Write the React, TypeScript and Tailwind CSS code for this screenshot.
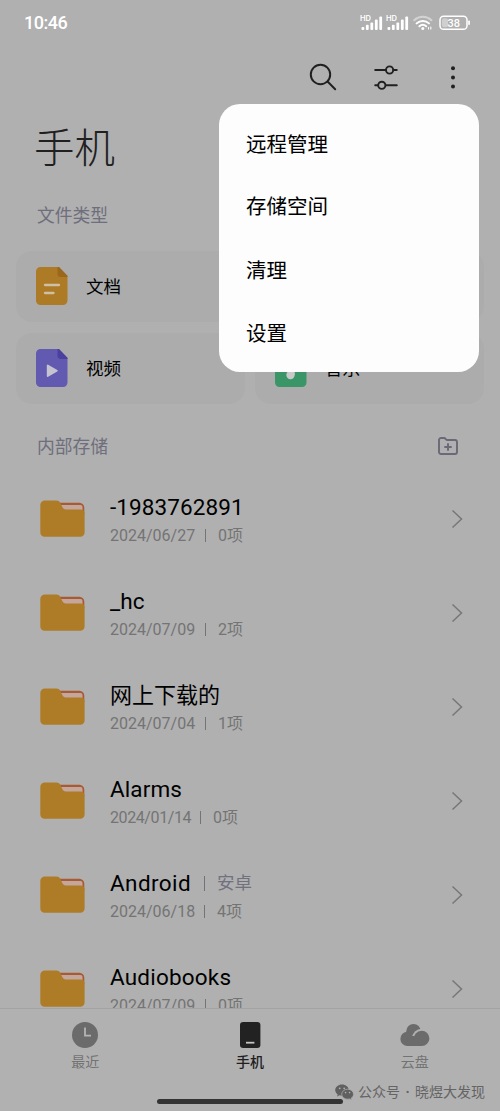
import React from 'react';

interface FolderItem {
  name: string;
  tag?: string;
  date: string;
  count: string;
  nameClass: string;
  dateClass: string;
}

const FOLDERS: FolderItem[] = [
  { name: '-1983762891', date: '2024/06/27', count: '0项', nameClass: 'tracking-[0.1px]', dateClass: 'w-[85px]' },
  { name: '_hc', date: '2024/07/09', count: '2项', nameClass: 'tracking-[0.1px]', dateClass: 'w-[85px]' },
  { name: '网上下载的', date: '2024/07/04', count: '1项', nameClass: 'text-[22px]', dateClass: 'w-[85px]' },
  { name: 'Alarms', date: '2024/01/14', count: '0项', nameClass: 'tracking-[0.1px]', dateClass: 'w-[80px] tracking-[-0.4px]' },
  { name: 'Android', tag: '安卓', date: '2024/06/18', count: '4项', nameClass: 'tracking-[0.4px]', dateClass: 'w-[84px]' },
  { name: 'Audiobooks', date: '2024/07/09', count: '0项', nameClass: 'tracking-[0.2px]', dateClass: 'w-[85px]' },
];

const MENU_ITEMS = [
  { label: '远程管理', className: 'h-[62px]' },
  { label: '存储空间', className: 'h-[63px]' },
  { label: '清理', className: 'h-[65px]' },
  { label: '设置', className: 'h-[60px]' },
];

const Signal = () => (
  <svg width="24" height="16" viewBox="0 0 24 16" fill="#fff">
    <text x="0" y="5.8" fontSize="7.5" fontWeight="600" fontFamily="Inter, sans-serif">HD</text>
    <rect x="1.5" y="12" width="2.8" height="3" rx="1" />
    <rect x="5.9" y="9.8" width="2.8" height="5.2" rx="1" />
    <rect x="10.4" y="7.4" width="2.8" height="7.6" rx="1" />
    <rect x="14.9" y="4.6" width="2.8" height="10.4" rx="1" />
    <rect x="19.3" y="1.6" width="2.8" height="13.4" rx="1" />
  </svg>
);

const Wifi = () => (
  <svg width="20" height="16" viewBox="0 0 20 16" fill="none" stroke="#fff" strokeLinecap="round">
    <path d="M1.2 5.2a12.6 12.6 0 0 1 17.2 0" strokeWidth="2" opacity=".45" />
    <path d="M3.6 8.4a9 9 0 0 1 12.4 0" strokeWidth="2" />
    <path d="M6.4 11.3a5.2 5.2 0 0 1 6.8 0" strokeWidth="2" />
    <circle cx="9.8" cy="13.6" r="1.5" fill="#fff" stroke="none" />
    <path d="M15.5 12.5v1.5M17.8 12v2" strokeWidth="1.1" />
  </svg>
);

const Battery = () => (
  <svg width="32" height="16" viewBox="0 0 32 16" fill="none">
    <rect x="1" y="1.3" width="27" height="13" rx="3.6" stroke="#fff" strokeWidth="1.5" />
    <rect x="3" y="3.3" width="6" height="9" rx="2" fill="#fff" opacity=".4" />
    <text x="14.8" y="11.7" textAnchor="middle" fontSize="11" fontWeight="500" fontFamily="Roboto, sans-serif" fill="#fff">38</text>
    <rect x="29.2" y="5.5" width="1.7" height="4.6" rx=".8" fill="#fff" />
  </svg>
);

const StatusBar = () => (
  <div className="flex h-[46px] shrink-0 items-center pl-6 pr-[29px] text-white">
    <span className="flex-1 text-[18px] font-medium leading-none tracking-[-0.5px]">10:46</span>
    <Signal />
    <span className="w-[2px]" />
    <Signal />
    <span className="w-[3px]" />
    <Wifi />
    <span className="w-[6px]" />
    <Battery />
  </div>
);

const Toolbar = () => (
  <div className="flex h-[62px] shrink-0 items-center justify-end pr-[40px]">
    <svg width="28" height="28" viewBox="0 0 28 28" fill="none" stroke="#202020" strokeWidth="2" strokeLinecap="round">
      <circle cx="11.5" cy="11.5" r="9.7" />
      <path d="M18.8 18.8l7.4 7.4" />
    </svg>
    <svg className="ml-9" width="26" height="28" viewBox="0 0 26 28" fill="none" stroke="#202020" strokeWidth="1.9" strokeLinecap="round">
      <path d="M2.2 7h10.5M20.3 7h3.5" />
      <circle cx="16.6" cy="7" r="3.6" />
      <path d="M2.2 22.3h3M13 22.3h10.8" />
      <circle cx="8.8" cy="22.3" r="3.6" />
    </svg>
    <svg className="ml-[47px]" width="14" height="28" viewBox="0 0 14 28" fill="#202020">
      <circle cx="7" cy="5.3" r="2" />
      <circle cx="7" cy="14.4" r="2" />
      <circle cx="7" cy="23.6" r="2" />
    </svg>
  </div>
);

interface FileIconProps {
  body: string;
  fold: string;
  children: React.ReactNode;
}

const FileIcon: React.FC<FileIconProps> = ({ body, fold, children }) => (
  <svg width="32" height="38" viewBox="0 0 32 38">
    <path d="M4.5 0H22.5L31.5 9.2V33.5A4.5 4.5 0 0 1 27 38H4.5A4.5 4.5 0 0 1 0 33.5V4.5A4.5 4.5 0 0 1 4.5 0Z" fill={body} />
    <path d="M21.5 0h1.6l8.4 8.8V10H25a3.5 3.5 0 0 1-3.5-3.5Z" fill={fold} />
    {children}
  </svg>
);

const TypeCard = ({ label, icon }: { label: string; icon: React.ReactNode }) => (
  <div className="flex h-[71px] items-center gap-[18px] rounded-[16px] bg-[#acacac] pb-[2px] pl-5">
    {icon}
    <span className="pt-1 text-[17.5px] leading-none text-black">{label}</span>
  </div>
);

const Note = () => (
  <>
    <circle cx="15.5" cy="26" r="4.2" fill="#c9c9c9" />
    <path d="M18.5 26V11h4" stroke="#c9c9c9" strokeWidth="2.4" fill="none" />
  </>
);

const FolderIcon = () => (
  <svg className="shrink-0" width="45" height="38" viewBox="0 0 45 38">
    <path d="M16 2.8H39.5A5 5 0 0 1 44.3 7.8V14H16Z" fill="#a85a32" />
    <path d="M20.5 5H40.5A2 2 0 0 1 42.5 7V12H21Z" fill="#c4a79c" />
    <path d="M5 .5H16.4C18.2.5 19.3 1.2 20.2 2.7L22.3 7C23.1 8.6 24.1 9.4 25.7 9.4H40.6A4 4 0 0 1 44.6 13.2V32.5A4.3 4.3 0 0 1 40.3 36.8H4.6A4.3 4.3 0 0 1 .3 32.5V5A4.4 4.4 0 0 1 5 .5Z" fill="#ae7c27" />
  </svg>
);

const FolderRow: React.FC<{ item: FolderItem }> = ({ item }) => (
  <div className="flex h-[94px] shrink-0 items-center pl-10 pr-[36px]">
    <FolderIcon />
    <div className="ml-[25px] flex flex-1 flex-col pt-[3px]">
      <div className="flex h-[30px] items-center text-[22.5px] leading-none text-black">
        <span className={item.nameClass}>{item.name}</span>
        {item.tag && (
          <>
            <span className="ml-[13px] h-[15px] w-px bg-[#70707f]" />
            <span className="ml-[12px] text-[17.5px] text-[#70707f]">{item.tag}</span>
          </>
        )}
      </div>
      <div className="flex h-[26px] items-center text-[16px] leading-none text-[#747474]">
        <span className={item.dateClass}>{item.date}</span>
        <span className="ml-[10px] mr-[12px] h-[13px] w-px bg-[#747474]" />
        <span>{item.count}</span>
      </div>
    </div>
    <svg width="14" height="20" viewBox="0 0 14 20" fill="none" stroke="#777" strokeWidth="1.5">
      <path d="M2.5 1.5L11.5 10L2.5 18.5" />
    </svg>
  </div>
);

const BottomNav = () => (
  <nav className="flex h-[103px] shrink-0 flex-col border-t border-[#a3a3a3] bg-[#b1b1b1]">
    <div className="flex px-[3px] pt-3 text-[14px] leading-none text-[#737373]">
      <div className="flex flex-1 flex-col items-center">
        <svg width="28" height="28" viewBox="0 0 28 28">
          <circle cx="14" cy="14" r="13" fill="#6b6b6b" />
          <path d="M14 6.5V14.6H20" fill="none" stroke="#b5b5b5" strokeWidth="1.8" />
        </svg>
        <span className="mt-[6px]">最近</span>
      </div>
      <div className="flex flex-1 flex-col items-center font-medium text-[#202020]">
        <svg width="28" height="28" viewBox="0 0 28 28">
          <rect x="4" y="1" width="20.4" height="26" rx="3.2" fill="#222" />
          <path d="M10 21.7h8.4" stroke="#c4c4c4" strokeWidth="1.8" />
        </svg>
        <span className="mt-[6px]">手机</span>
      </div>
      <div className="flex flex-1 flex-col items-center">
        <svg width="30" height="28" viewBox="0 0 30 28" fill="#6b6b6b">
          <circle cx="13.5" cy="10.2" r="7.2" />
          <circle cx="7.6" cy="17.9" r="7.2" />
          <circle cx="21.7" cy="17.4" r="9.6" fill="#b1b1b1" />
          <path d="M13.5 25H7.6V15h6.7Z" />
          <path d="M21.7 9.7a7.65 7.65 0 0 1 0 15.4H12V19h1.9A8 8 0 0 1 21.7 9.7Z" />
        </svg>
        <span className="mt-[6px]">云盘</span>
      </div>
    </div>
    <div className="mx-auto mt-[30px] h-[5px] w-[186px] rounded-full bg-[#343434]" />
  </nav>
);

const Watermark = () => (
  <div className="absolute bottom-[9px] right-[15px] flex items-center text-[14px] leading-[20px] text-[#646464]">
    <svg className="mr-[4px]" width="19" height="16" viewBox="0 0 19 16">
      <path d="M7 .5C3.2.5.2 3 .2 6.1c0 1.8 1 3.3 2.5 4.3l-.7 2.2 2.5-1.3c.9.3 1.7.4 2.5.4C10.8 11.7 13.8 9.2 13.8 6.1S10.8.5 7 .5Z" fill="#606060" />
      <path d="M12.6 5.2c-3.3 0-5.9 2.2-5.9 5s2.6 5 5.9 5c.7 0 1.4-.1 2-.3l2.2 1-.6-1.8c1.4-.9 2.3-2.3 2.3-3.9 0-2.8-2.6-5-5.9-5Z" fill="#606060" stroke="#b1b1b1" strokeWidth=".7" />
      <g fill="#b1b1b1">
        <circle cx="4.7" cy="4.3" r=".9" />
        <circle cx="9.2" cy="4.3" r=".9" />
        <circle cx="10.6" cy="8.6" r=".8" />
        <circle cx="14.6" cy="8.6" r=".8" />
      </g>
    </svg>
    <span>公众号</span>
    <span className="w-[15px] text-center font-bold">·</span>
    <span>晓煜大发现</span>
  </div>
);

export default function App() {
  return (
    <div className="relative flex h-[1111px] w-[500px] flex-col overflow-hidden bg-[#b0b0b0] font-['Roboto','Noto_Sans_CJK_SC',sans-serif]">
      <StatusBar />
      <Toolbar />
      <h1 className="flex h-[80px] shrink-0 items-center pb-[3px] pl-[34px] font-['Noto_Sans_CJK_SC',sans-serif] text-[40.5px] font-light leading-none text-[#202020]">手机</h1>

      {/* File types */}
      <div className="flex h-[55px] shrink-0 items-center px-[37px] pt-px text-[17.8px] leading-none text-[#6e6e7c]">文件类型</div>
      <div className="grid shrink-0 grid-cols-2 gap-x-[10px] gap-y-[11px] px-4 pt-2">
        <TypeCard
          label="文档"
          icon={
            <FileIcon body="#ad7b26" fold="#9b671d">
              <path d="M9 18h14M9 26h8.5" stroke="#cfc0a4" strokeWidth="2.3" strokeLinecap="round" />
            </FileIcon>
          }
        />
        <TypeCard
          label="图片"
          icon={
            <FileIcon body="#3f77b8" fold="#2f5f9b">
              <path d="M8 27l6-8 4 5 3-3 4 6Z" fill="#c9c9c9" />
            </FileIcon>
          }
        />
        <TypeCard
          label="视频"
          icon={
            <FileIcon body="#6259b1" fold="#4a419e">
              <path d="M11.7 16.5V27L20.8 21.8Z" fill="#c5c3d0" stroke="#c5c3d0" strokeWidth="1.8" strokeLinejoin="round" />
            </FileIcon>
          }
        />
        <TypeCard
          label="音乐"
          icon={
            <FileIcon body="#3a9567" fold="#2c7c53">
              <Note />
            </FileIcon>
          }
        />
      </div>

      {/* Internal storage */}
      <div className="flex h-[68px] shrink-0 items-center justify-between pl-[37px] pr-[42px] pt-[16px] text-[17.8px] leading-none text-[#6e6e7c]">
        <span className="pt-[2px]">内部存储</span>
        <svg width="20" height="18" viewBox="0 0 20 18" fill="none" stroke="#6b6877" strokeWidth="1.9">
          <path d="M1 3A2 2 0 0 1 3 1H6.2C7.4 1 7.6 3 9 3H17A2 2 0 0 1 19 5V15A2 2 0 0 1 17 17H3A2 2 0 0 1 1 15Z" />
          <path d="M10 6.3v7.4M6.3 10h7.4" />
        </svg>
      </div>
      <div className="flex min-h-0 flex-1 flex-col overflow-hidden">
        {FOLDERS.map((item) => (
          <FolderRow key={item.name} item={item} />
        ))}
      </div>

      <BottomNav />
      <Watermark />

      {/* Overflow menu */}
      <div className="absolute left-[219px] top-[104px] h-[268px] w-[260px] rounded-[21px] bg-[#fdfdfd] pl-[27px] pt-[10px] text-[20.5px] leading-none text-black">
        {MENU_ITEMS.map((item) => (
          <div key={item.label} className={`flex items-center ${item.className}`}>{item.label}</div>
        ))}
      </div>
    </div>
  );
}
